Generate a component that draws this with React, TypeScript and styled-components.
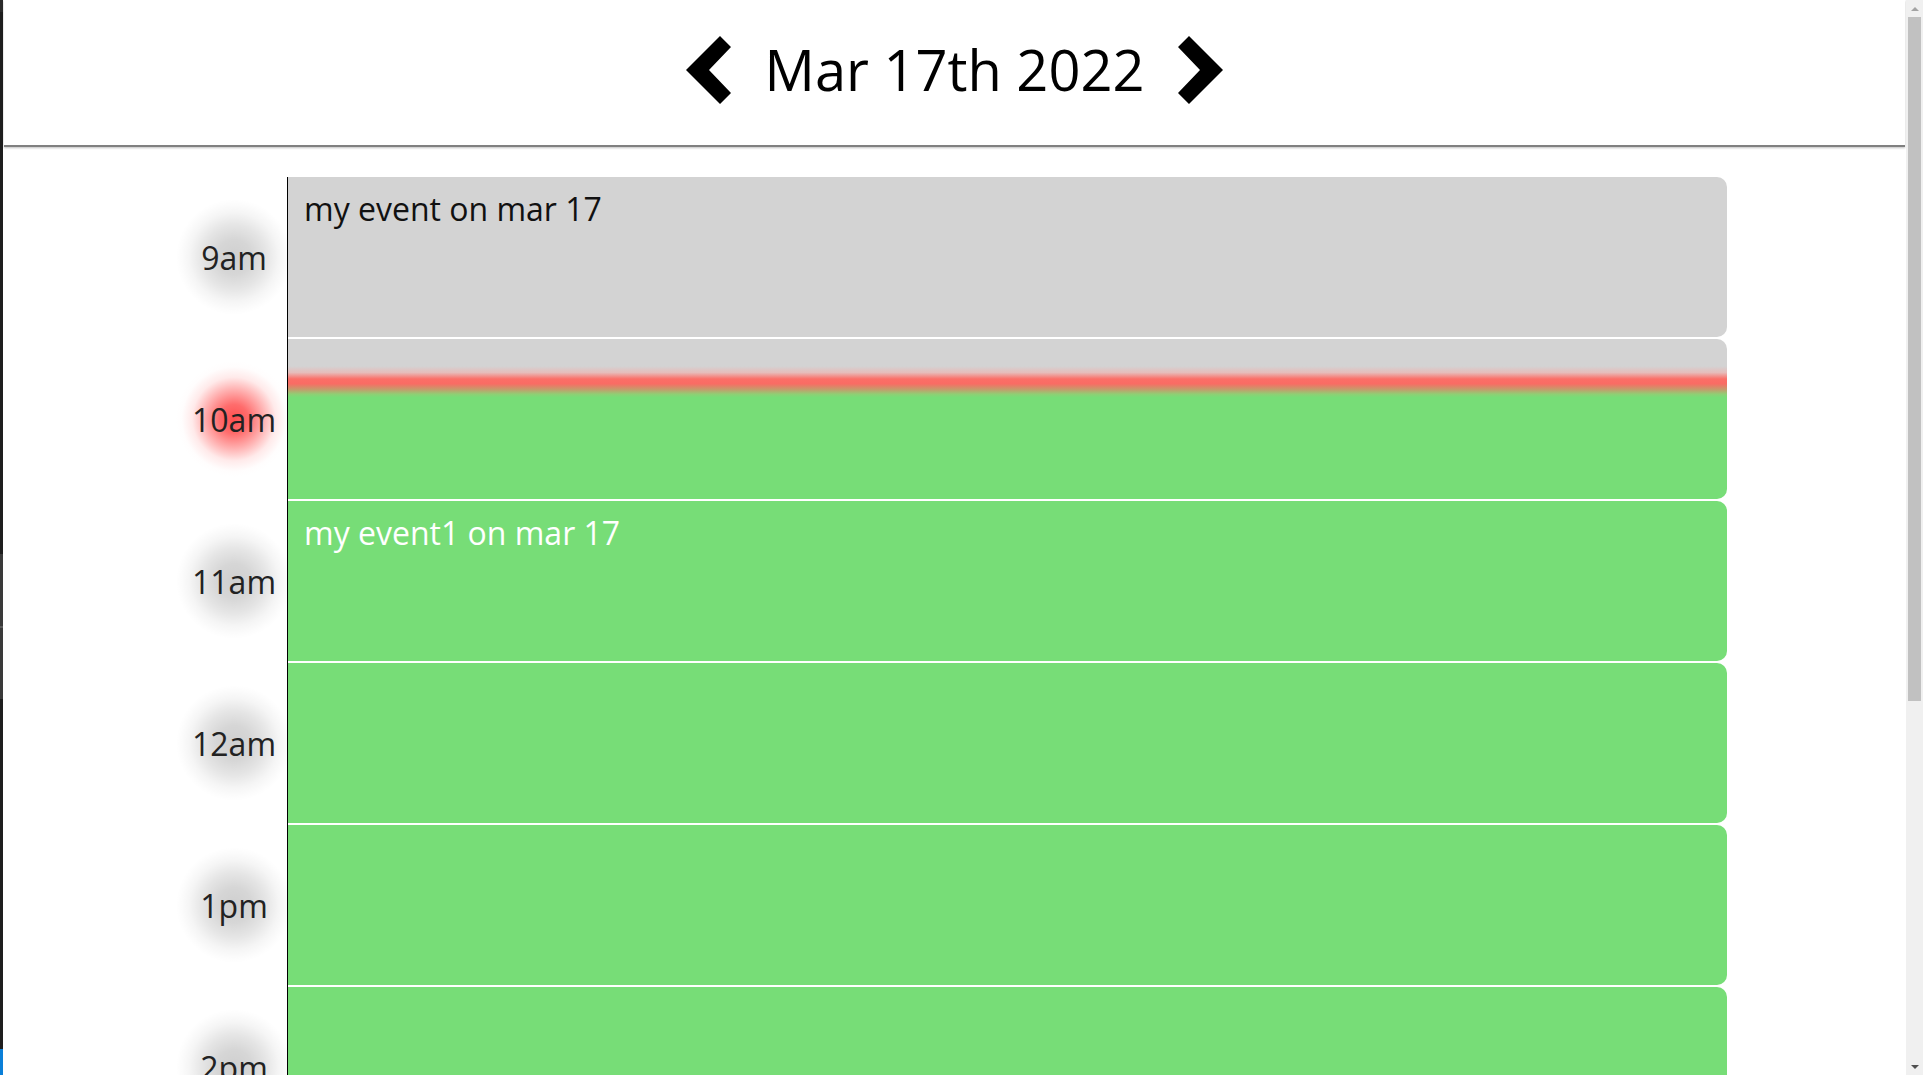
import React from "react";
import styled, { createGlobalStyle } from "styled-components";

const GlobalStyle = createGlobalStyle`
  html {
    scrollbar-width: none;
  }
  html, body {
    margin: 0;
    padding: 0;
  }
  body {
    padding-left: 3px;
    padding-right: 17px;
    font-family: "Open Sans", "Noto Sans", sans-serif;
    background-color: #ffffff;
    background-image: linear-gradient(
      to bottom,
      #2a2a2a 0px, #2a2a2a 12px,
      #1e1e1e 12px, #1e1e1e 554px,
      #3a3a3a 554px, #3a3a3a 626px,
      #5a5a5a 626px, #5a5a5a 628px,
      #3a3a3a 628px, #3a3a3a 699px,
      #1e1e1e 699px, #1e1e1e 1049px,
      #0a7fd8 1049px, #0a7fd8 100%
    );
    background-size: 3px 100vh;
    background-repeat: no-repeat;
    background-attachment: fixed;
  }
`;

const Page = styled.div`
  min-height: 100vh;
`;

const Header = styled.header`
  margin-left: 1px;
  margin-right: 1px;
  height: 145px;
  display: flex;
  align-items: center;
  justify-content: center;
  gap: 34px;
  border-bottom: 2px solid #808080;
  box-shadow: 0 1px 2px rgba(0, 0, 0, 0.25);
`;

const NavButton = styled.button`
  background: none;
  border: 0;
  padding: 0;
  margin: -6px 0 0 0;
  width: 45px;
  height: 68px;
  display: flex;
  cursor: pointer;
`;

const Title = styled.h1`
  margin: 0;
  padding-bottom: 7px;
  font-family: "Open Sans", "Noto Sans", sans-serif;
  font-weight: 500;
  font-size: 56px;
  color: #000;
  line-height: 1.362;
`;

const Schedule = styled.main`
  padding: 30px 179px 0 181px;
  display: flex;
  flex-direction: column;
`;

const HourRow = styled.div`
  display: grid;
  grid-template-columns: 100px 1fr;
  column-gap: 3px;
`;

const LabelCell = styled.div`
  display: flex;
  align-items: center;
  justify-content: center;
`;

const TimeLabel = styled.span<{ $now?: boolean }>`
  flex: none;
  width: 116px;
  height: 116px;
  display: flex;
  align-items: center;
  justify-content: center;
  border-radius: 50%;
  font-size: 32px;
  color: #222;
  white-space: nowrap;
  margin-top: -2px;
  background: ${(p) =>
    p.$now
      ? "radial-gradient(circle closest-side, rgba(255,70,70,0.95) 0%, rgba(255,88,88,0.88) 25%, rgba(255,125,125,0.62) 50%, rgba(255,185,185,0.3) 72%, rgba(255,230,230,0.08) 90%, rgba(255,255,255,0) 100%)"
      : "radial-gradient(circle closest-side, rgba(0,0,0,0.19) 0%, rgba(0,0,0,0.16) 30%, rgba(0,0,0,0.1) 55%, rgba(0,0,0,0.04) 77%, rgba(0,0,0,0.01) 92%, rgba(0,0,0,0) 100%)"};
`;

const Slot = styled.div`
  border-left: 1px solid #000;
  padding-bottom: 2px;
`;

type Kind = "past" | "now" | "future";

const fills: Record<Kind, string> = {
  past: "#d3d3d3",
  now: "linear-gradient(to bottom, #d3d3d3 0%, #d3d3d3 17%, #e6bcba 21%, #fb6e67 25%, #f96c64 28%, #c59b6c 31.5%, #8fcf74 34.5%, #77dd77 36.5%, #77dd77 100%)",
  future: "#77dd77",
};

const Block = styled.div<{ $kind: Kind }>`
  height: 160px;
  box-sizing: border-box;
  padding: 10px 16px;
  border-radius: 0 10px 10px 0;
  background: ${(p) => fills[p.$kind]};
  color: ${(p) => (p.$kind === "past" ? "#111" : "#fff")};
  font-size: 32px;
  line-height: 1.362;
`;

const ScrollBar = styled.aside`
  position: fixed;
  top: 0;
  right: 0;
  bottom: 0;
  width: 17px;
  background: #f0f0f0;
  display: flex;
  flex-direction: column;
`;

const ScrollArrow = styled.div<{ $down?: boolean; $disabled?: boolean }>`
  flex: none;
  height: 17px;
  display: flex;
  align-items: center;
  justify-content: center;
  &::before {
    content: "";
    width: 0;
    height: 0;
    border-left: 4px solid transparent;
    border-right: 4px solid transparent;
    ${(p) =>
      p.$down
        ? `border-top: 4px solid ${p.$disabled ? "#a3a3a3" : "#505050"};`
        : `border-bottom: 4px solid ${p.$disabled ? "#a3a3a3" : "#505050"};`}
  }
`;

const ScrollTrack = styled.div`
  flex: 1;
  padding: 0 2px;
`;

const ScrollThumb = styled.div`
  height: 684px;
  background: #c1c1c1;
`;

const Chevron = ({ dir }: { dir: "left" | "right" }) => (
  <svg width="45" height="68" viewBox="0 0 45 68" aria-hidden="true">
    <polygon
      points="34,0 45,11 23,34 45,57 34,68 0,34"
      fill="#000"
      transform={dir === "right" ? "translate(45,0) scale(-1,1)" : undefined}
    />
  </svg>
);

const hours: { label: string; kind: Kind; event?: string }[] = [
  { label: "9am", kind: "past", event: "my event on mar 17" },
  { label: "10am", kind: "now" },
  { label: "11am", kind: "future", event: "my event1 on mar 17" },
  { label: "12am", kind: "future" },
  { label: "1pm", kind: "future" },
  { label: "2pm", kind: "future" },
  { label: "3pm", kind: "future" },
  { label: "4pm", kind: "future" },
  { label: "5pm", kind: "future" },
];

export default function App() {
  return (
    <Page>
      <GlobalStyle />
      <Header>
        <NavButton aria-label="previous day">
          <Chevron dir="left" />
        </NavButton>
        <Title>Mar 17th 2022</Title>
        <NavButton aria-label="next day">
          <Chevron dir="right" />
        </NavButton>
      </Header>
      <Schedule>
        {hours.map((h) => (
          <HourRow key={h.label}>
            <LabelCell>
              <TimeLabel $now={h.kind === "now"}>{h.label}</TimeLabel>
            </LabelCell>
            <Slot>
              <Block $kind={h.kind}>{h.event}</Block>
            </Slot>
          </HourRow>
        ))}
      </Schedule>
      <ScrollBar aria-hidden="true">
        <ScrollArrow $disabled />
        <ScrollTrack>
          <ScrollThumb />
        </ScrollTrack>
        <ScrollArrow $down />
      </ScrollBar>
    </Page>
  );
}
